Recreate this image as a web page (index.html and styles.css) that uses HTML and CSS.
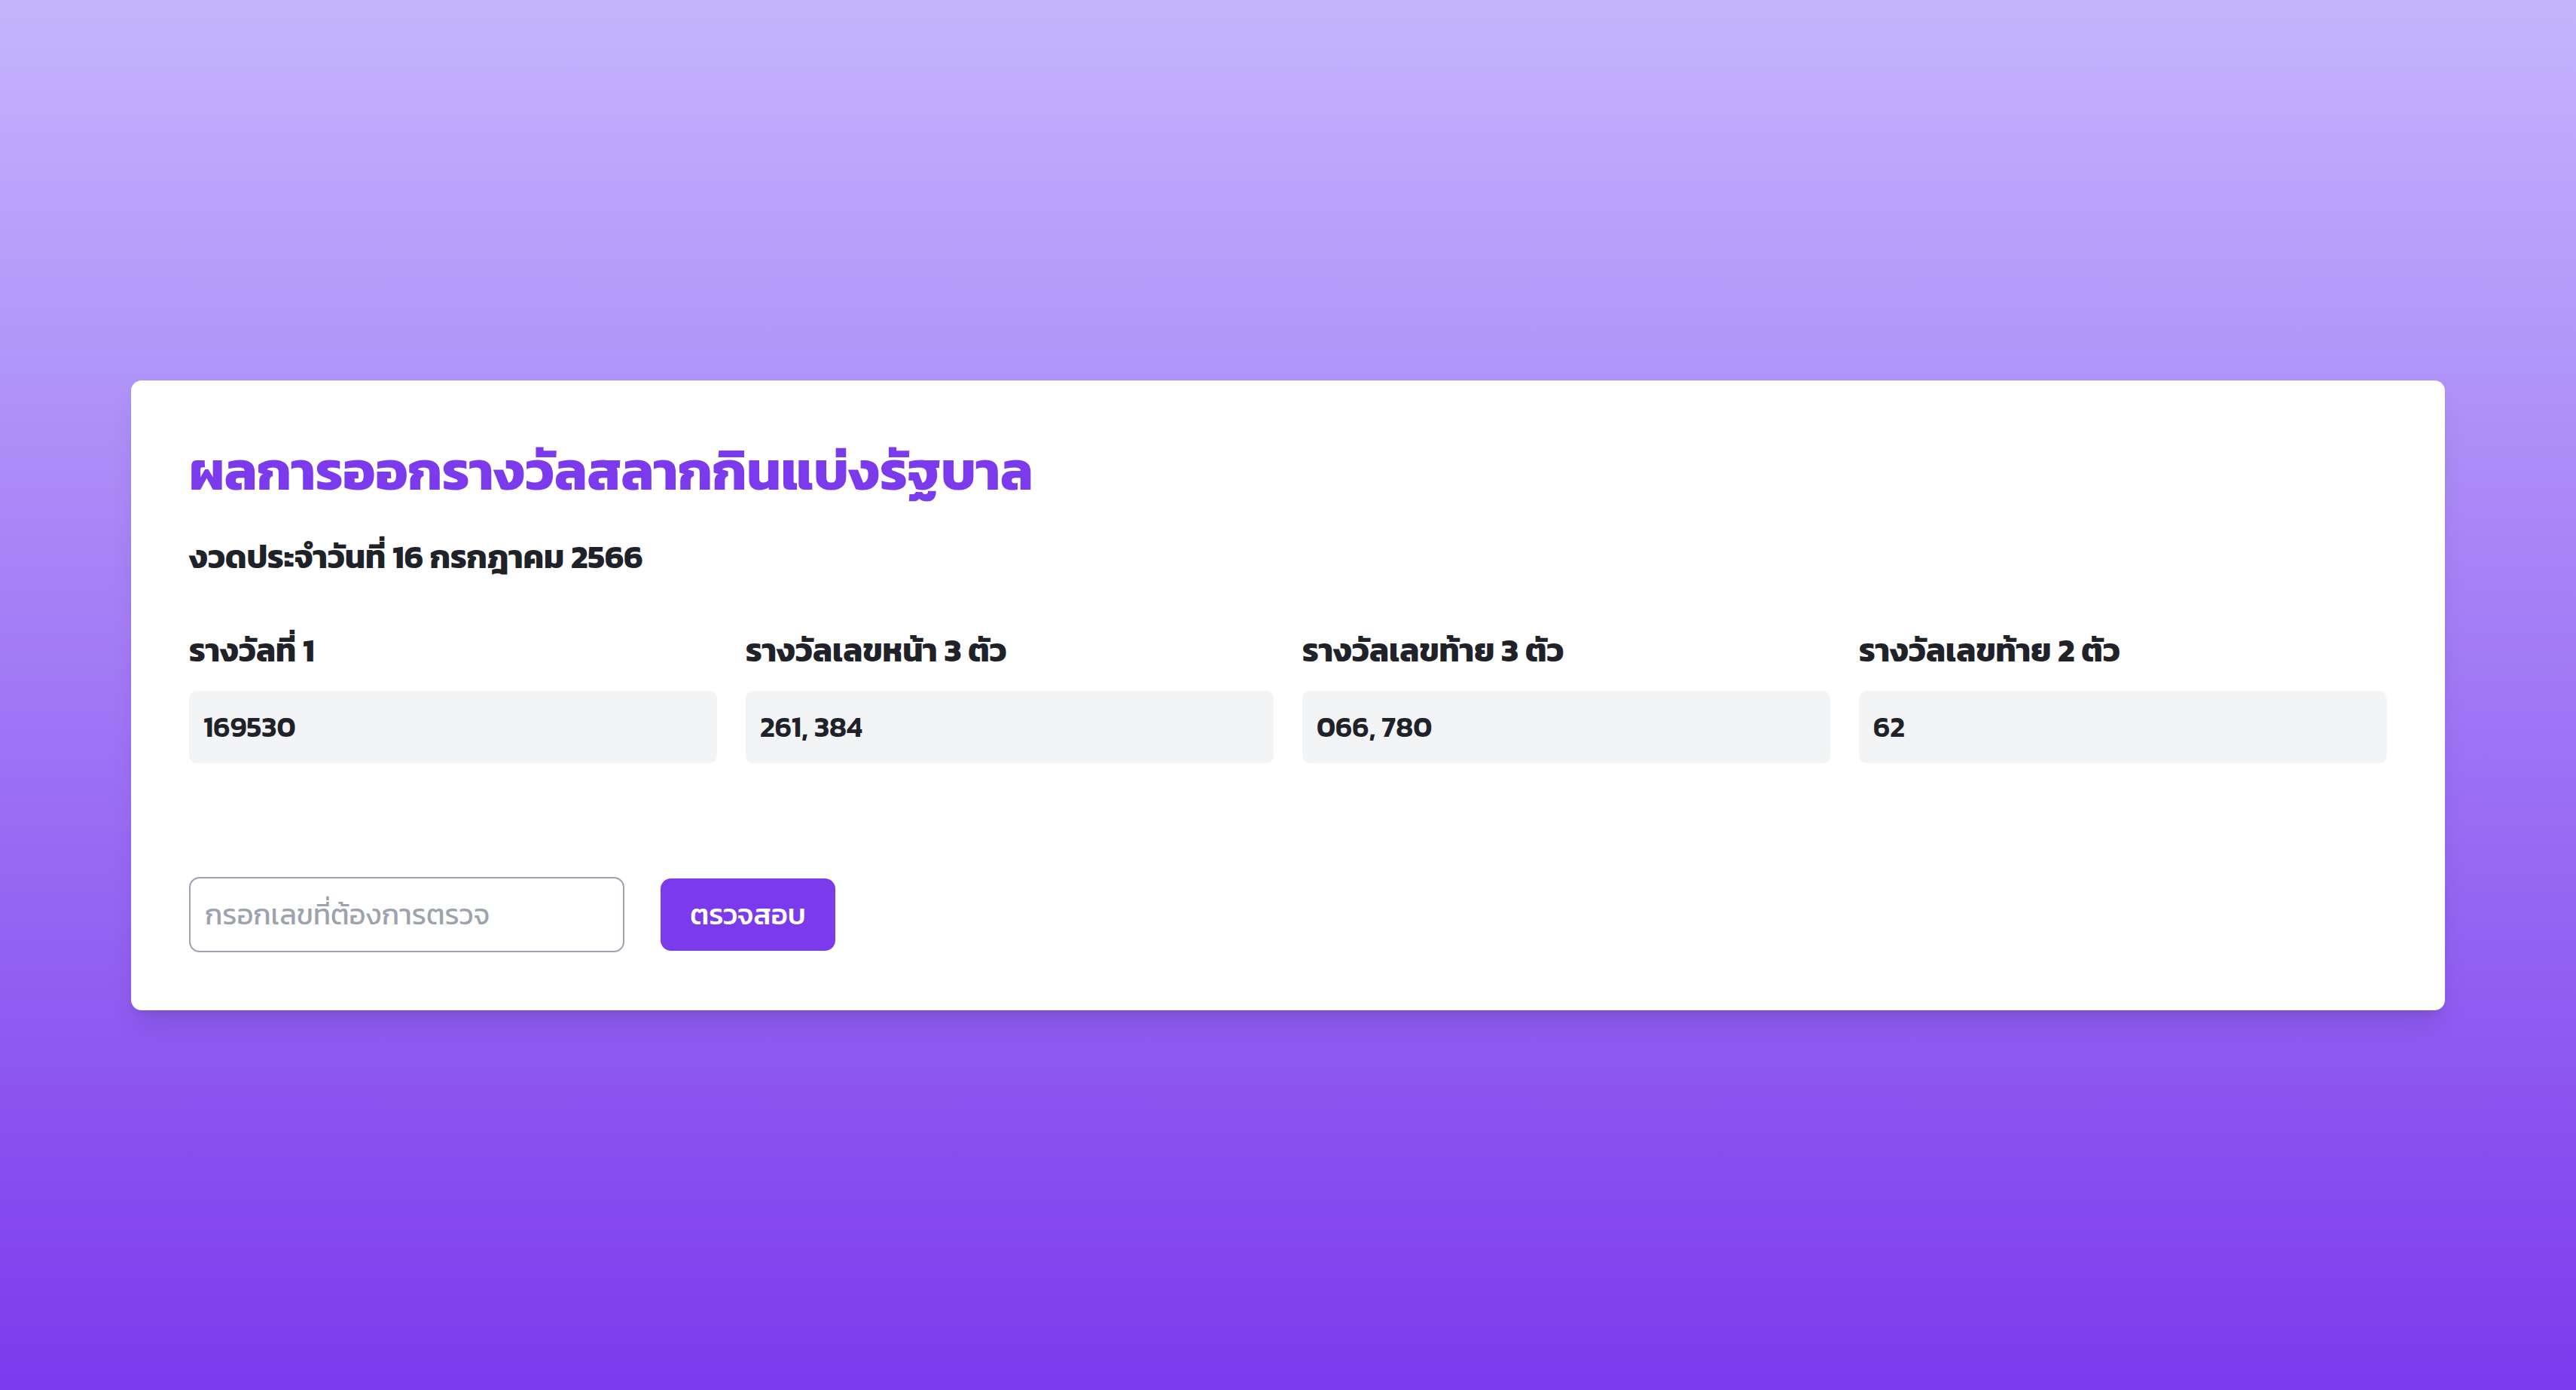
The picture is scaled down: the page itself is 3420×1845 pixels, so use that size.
FILE: index.html
```html
<!DOCTYPE html>
<html lang="th">
<head>
<meta charset="utf-8">
<title>ผลการออกรางวัลสลากกินแบ่งรัฐบาล</title>
<link rel="stylesheet" href="styles.css">
</head>
<body>
<main class="page">
  <section class="card">
    <h1 class="title">ผลการออกรางวัลสลากกินแบ่งรัฐบาล</h1>
    <p class="date">งวดประจำวันที่ 16 กรกฎาคม 2566</p>
    <div class="prizes">
      <div class="prize">
        <h2 class="prize-label">รางวัลที่ 1</h2>
        <div class="prize-value">169530</div>
      </div>
      <div class="prize">
        <h2 class="prize-label">รางวัลเลขหน้า 3 ตัว</h2>
        <div class="prize-value">261, 384</div>
      </div>
      <div class="prize">
        <h2 class="prize-label">รางวัลเลขท้าย 3 ตัว</h2>
        <div class="prize-value">066, 780</div>
      </div>
      <div class="prize">
        <h2 class="prize-label">รางวัลเลขท้าย 2 ตัว</h2>
        <div class="prize-value">62</div>
      </div>
    </div>
    <form class="check">
      <input class="check-input" type="text" placeholder="กรอกเลขที่ต้องการตรวจ">
      <button class="check-btn" type="button">ตรวจสอบ</button>
    </form>
  </section>
</main>
</body>
</html>
```

FILE: styles.css
```css
* { box-sizing: border-box; }
html, body { margin: 0; padding: 0; }
body {
  font-family: "Kanit", "Noto Sans Thai", "Noto Sans Thai Looped", "Noto Sans", "DejaVu Sans", sans-serif;
  color: #1f2329;
  background: linear-gradient(to bottom, #c4b5fd 0%, #7c3aed 100%);
  min-height: 1845px;
}
.page {
  min-height: 1845px;
  display: flex;
  align-items: center;
  justify-content: center;
}
.card {
  width: 3072px;
  background: #ffffff;
  border-radius: 14px;
  padding: 77px;
  box-shadow: 0 24px 36px -7px rgba(0,0,0,0.10), 0 10px 14px -10px rgba(0,0,0,0.10);
}
.title {
  margin: 0 0 38px;
  font-size: 72px;
  line-height: 86px;
  font-weight: 700;
  color: #7c3aed;
}
.date {
  margin: 0 0 57px;
  font-size: 43px;
  line-height: 67px;
  font-weight: 700;
}
.prizes {
  display: grid;
  grid-template-columns: repeat(4, 1fr);
  gap: 38px;
  margin-bottom: 151px;
}
.prize-label {
  margin: 0 0 20px;
  font-size: 43px;
  line-height: 67px;
  font-weight: 700;
}
.prize-value {
  background: #f3f4f6;
  border-radius: 10px;
  height: 96px;
  padding: 0 19px;
  display: flex;
  align-items: center;
  font-size: 38px;
  font-weight: 600;
}
.check {
  display: flex;
  align-items: center;
  gap: 48px;
}
.check-input {
  width: 578px;
  height: 100px;
  border: 2px solid #9ca3af;
  border-radius: 14px;
  padding: 0 19px;
  font-family: inherit;
  font-size: 38px;
  color: #1f2329;
  outline: none;
}
.check-input::placeholder { color: #9ca3af; }
.check-btn {
  width: 232px;
  height: 96px;
  border: none;
  border-radius: 14px;
  background: #7c3aed;
  color: #ffffff;
  font-family: inherit;
  font-size: 38px;
  font-weight: 500;
  cursor: pointer;
}
```
